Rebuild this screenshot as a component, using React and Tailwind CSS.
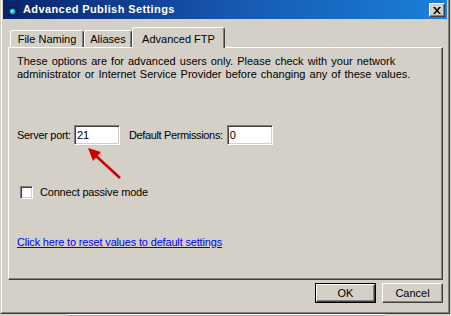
import React from 'react';

// little spiky globe in the caption
const AppIcon = () => (
  <svg width="11" height="11" viewBox="0 0 11 11">
    <g stroke="#06103a" strokeWidth="1.4">
      <line x1="5.5" y1="0" x2="5.5" y2="11" />
      <line x1="0" y1="5.5" x2="11" y2="5.5" />
      <line x1="1.2" y1="1.2" x2="9.8" y2="9.8" />
      <line x1="9.8" y1="1.2" x2="1.2" y2="9.8" />
    </g>
    <circle cx="5.5" cy="5.5" r="3.2" fill="#22c4dc" stroke="#06103a" strokeWidth="0.8" />
    <circle cx="5" cy="5" r="1" fill="#a8f0ff" />
  </svg>
);

const CloseGlyph = () => (
  <svg width="8" height="7" viewBox="0 0 8 7">
    <path d="M0 0h2l2 2.5L6 0h2L5 3.5 8 7H6L4 4.5 2 7H0l3-3.5z" fill="#000" />
  </svg>
);

const raised =
  'border border-t-white border-l-white border-r-[#404040] border-b-[#404040] shadow-[inset_-1px_-1px_0_#808080]';
const sunken =
  'border border-t-[#808080] border-l-[#808080] border-r-white border-b-white shadow-[inset_1px_1px_0_#404040,inset_-1px_-1px_0_#d4d0c8]';

const Tab = ({ label, width }) => (
  <div
    className={`${width} h-[17px] flex items-center justify-center rounded-t-[3px] border-t border-l border-r border-t-white border-l-white border-r-[#404040] shadow-[inset_-1px_0_0_#808080] pt-[1px]`}
  >
    {label}
  </div>
);

const TextBox = ({ value }) => (
  <div className={`w-[46px] h-[20px] bg-white ${sunken} flex items-center pl-[2px]`}>
    <span className="text-black">{value}</span>
  </div>
);

export default function App() {
  return (
    <div className="w-[451px] h-[316px] bg-[#d4d0c8] flex flex-col text-[11px] text-black font-['Liberation_Sans',Arial,sans-serif] overflow-hidden">
      {/* window frame */}
      <div className="w-[450px] h-[314px] border-l border-r border-b border-l-[#d4d0c8] border-r-[#404040] border-b-[#404040]">
        <div className="h-full border-l border-r border-b border-l-white border-r-[#808080] border-b-[#808080] px-[1px] pb-[1px] flex flex-col">
          {/* caption */}
          <div className="h-[19px] bg-gradient-to-r from-[#0a246a] via-[#1656b0] to-[#1b80d8] flex items-start pl-[4px] pr-[2px]">
            <div className="mt-[6px]">
              <AppIcon />
            </div>
            <span className="ml-[5px] mt-[3px] text-white font-bold text-[11px] leading-[13px] tracking-[0.4px]">
              Advanced Publish Settings
            </span>
            <div className={`ml-auto mt-[3px] w-[16px] h-[14px] bg-[#d4d0c8] ${raised} flex items-center justify-center`}>
              <CloseGlyph />
            </div>
          </div>

          {/* tabs */}
          <div className="flex items-end h-[20px] mt-[8px] ml-[5px] pl-[2px]">
            <Tab label="File Naming" width="w-[74px]" />
            <Tab label="Aliases" width="w-[48px]" />
            <div className="relative z-10 w-[93px] h-[21px] -mb-[1px] bg-[#d4d0c8] flex items-start justify-center pt-[3px] rounded-t-[3px] border-t border-l border-r border-t-white border-l-white border-r-[#404040] shadow-[inset_-1px_0_0_#808080]">
              Advanced FTP
            </div>
          </div>

          {/* tab page */}
          <div className={`relative ml-[5px] w-[435px] h-[233px] ${raised} flex flex-col pl-[8px] pt-[7px]`}>
            <p className="leading-[13px] [word-spacing:1px]">
              These options are for advanced users only. Please check with your network
              <br />
              administrator or Internet Service Provider before changing any of these values.
            </p>

            <div className="flex items-center mt-[44px] h-[20px]">
              <span className="tracking-[-0.3px]">Server port:</span>
              <div className="ml-[3px]">
                <TextBox value="21" />
              </div>
              <span className="ml-[9px] tracking-[-0.35px]">Default Permissions:</span>
              <div className="ml-[4px]">
                <TextBox value="0" />
              </div>
            </div>

            <div className="flex items-center mt-[41px] h-[13px] pl-[3px]">
              <div className={`w-[13px] h-[13px] bg-white ${sunken}`} />
              <span className="ml-[7px] tracking-[-0.2px]">Connect passive mode</span>
            </div>

            <a href="#" className="mt-[37px] leading-[13px] text-[#0000ff] underline self-start tracking-[-0.17px]">
              Click here to reset values to default settings
            </a>

            {/* red annotation arrow */}
            <svg className="absolute left-[75px] top-[96px]" width="40" height="38" viewBox="0 0 40 38">
              <line x1="11" y1="11" x2="36" y2="34" stroke="#cc0000" strokeWidth="2.5" />
              <polygon points="4,4 17,8 9,17" fill="#cc0000" />
            </svg>
          </div>

          {/* dialog buttons */}
          <div className="flex justify-end gap-[6px] mt-[3px] w-[440px]">
            <div className="w-[61px] h-[20px] border border-black">
              <div className={`h-full bg-[#d4d0c8] ${raised} flex items-center justify-center`}>OK</div>
            </div>
            <div className={`w-[61px] h-[20px] bg-[#d4d0c8] ${raised} flex items-center justify-center`}>
              Cancel
            </div>
          </div>
        </div>
      </div>

      {/* whatever sits behind the dialog */}
      <div className="h-[2px] flex">
        <div className="ml-[67px] w-[318px] bg-[#a0a0a0] border-t border-t-white" />
      </div>
    </div>
  );
}
